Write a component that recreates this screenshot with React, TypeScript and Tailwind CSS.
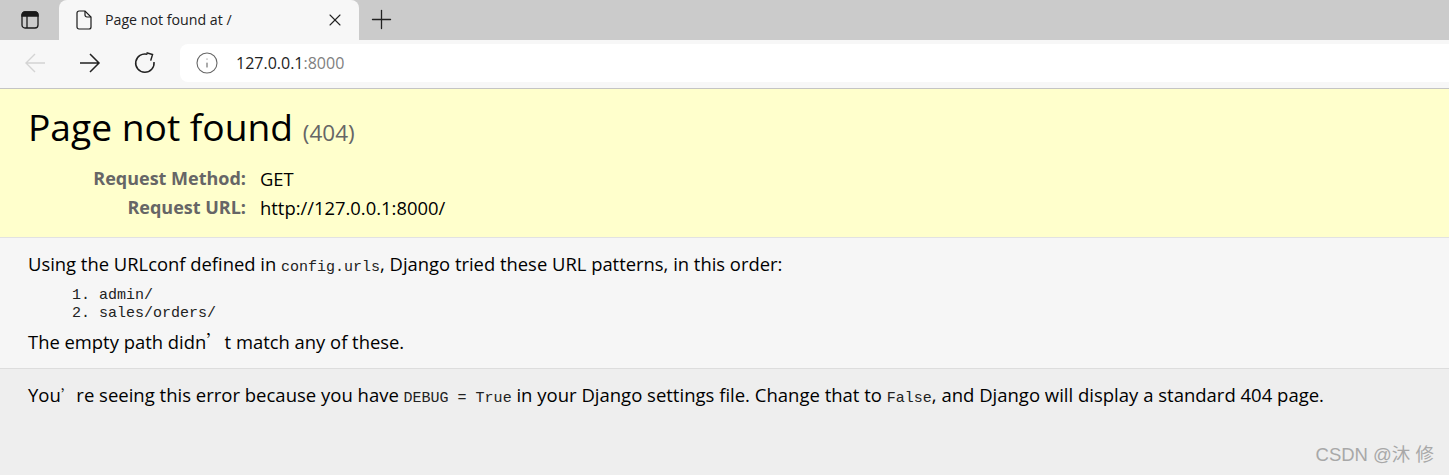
import { Info, Plus, X } from "lucide-react";

function TabsIcon() {
  return (
    <svg width="18" height="18" viewBox="0 0 18 18" fill="none" stroke="#1a1a1a" strokeWidth="1.3">
      <rect x="1" y="1" width="16" height="16" rx="3" />
      <path d="M1 4.2a3 3 0 0 1 3-3.2h10a3 3 0 0 1 3 3.2V5H1z" fill="#1a1a1a" />
      <path d="M6 5v12" />
    </svg>
  );
}

function PageIcon() {
  return (
    <svg width="16" height="20" viewBox="0 0 16 20" fill="none" stroke="#1a1a1a" strokeWidth="1.2">
      <path d="M3 1h6l6 6v10a2 2 0 0 1-2 2H3a2 2 0 0 1-2-2V3a2 2 0 0 1 2-2z" />
      <path d="M9 1v4a2 2 0 0 0 2 2h4" />
    </svg>
  );
}

function BackIcon({ color }: { color: string }) {
  return (
    <svg width="22" height="20" viewBox="0 0 22 20" fill="none" stroke={color} strokeWidth="1.4">
      <path d="M21 10H2M11 1l-9 9 9 9" />
    </svg>
  );
}

function ForwardIcon() {
  return (
    <svg width="22" height="20" viewBox="0 0 22 20" fill="none" stroke="#222" strokeWidth="1.5">
      <path d="M1 10h19M11 1l9 9-9 9" />
    </svg>
  );
}

function ReloadIcon() {
  return (
    <svg width="22" height="22" viewBox="0 0 22 22" fill="none" stroke="#222" strokeWidth="1.5">
      <path d="M13.5 2.3A9.2 9.2 0 1 0 20 10" />
      <path d="M12.5 .8l6 1.8-1.8 6" />
    </svg>
  );
}

function Code({ children }: { children: string }) {
  return <code className="font-['Liberation_Mono',monospace] text-[15px] text-[#222] whitespace-pre">{children}</code>;
}

// the quote falls back to a CJK font in the original, so it takes a full em
function Quote({ className = "" }: { className?: string }) {
  return <span className={`font-['Noto_Sans_CJK_SC',sans-serif] font-light ${className}`}>’</span>;
}

export default function App() {
  return (
    <div className="h-[475px] w-[1449px] overflow-hidden bg-[#eeeeee] font-['Open_Sans',sans-serif] text-[18.4px] text-black relative">
      <div className="flex h-10 items-end bg-[#cbcbcb]">
        <div className="flex h-10 w-[59px] items-center justify-center pb-[1px]">
          <TabsIcon />
        </div>
        <div className="flex h-10 w-[300px] items-center rounded-t-lg bg-[#f7f7f7] pl-[17px] pr-[14px]">
          <PageIcon />
          <span className="ml-[13px] flex-1 pb-[1px] text-[14.2px] text-[#222]">Page not found at /</span>
          <X size={20} strokeWidth={1.3} color="#222" />
        </div>
        <div className="flex h-10 w-[44px] items-center justify-center pb-[1px]">
          <Plus size={31} strokeWidth={1} color="#222" />
        </div>
      </div>

      <div className="flex h-[49px] items-center border-b border-[#c4c4c4] bg-[#f7f7f7] pb-[2px]">
        <div className="flex w-[180px] items-center pl-[24px]">
          <BackIcon color="#d4d4d4" />
          <div className="ml-[33px]">
            <ForwardIcon />
          </div>
          <div className="ml-[33px]">
            <ReloadIcon />
          </div>
        </div>
        <div className="flex h-[38px] flex-1 items-center rounded-l-lg bg-white pl-[15px]">
          <Info size={24} strokeWidth={1.1} color="#666" />
          <span className="ml-[17px] text-[16px] text-[#222]">
            127.0.0.1<span className="text-[#808080]">:8000</span>
          </span>
        </div>
      </div>

      <div className="h-[149px] border-b border-[#e2e2e2] bg-[#ffffcc] px-7 pt-[10px]">
        <h1 className="text-[37.2px] leading-[56px] font-normal">
          Page not found <span className="text-[22.5px] text-[#666]">(404)</span>
        </h1>
        <table className="mt-[3px] border-separate border-spacing-0">
          <tbody>
            <tr className="h-[29px]">
              <th className="w-[232px] pr-[14px] text-right text-[18px] font-bold text-[#666]">Request Method:</th>
              <td>GET</td>
            </tr>
            <tr className="h-[29px]">
              <th className="pr-[14px] text-right text-[18px] font-bold text-[#666]">Request URL:</th>
              <td>http://127.0.0.1:8000/</td>
            </tr>
          </tbody>
        </table>
      </div>

      <div className="h-[131px] border-b border-[#dddddd] bg-[#f6f6f6] px-7 pt-[13px]">
        <p className="leading-[25px]">
          Using the URLconf defined in <Code>config.urls</Code>, Django tried these URL patterns, in this order:
        </p>
        <ol className="mt-[7px] list-decimal pl-[71px] font-['Liberation_Mono',monospace] text-[15px] leading-[18px] text-[#222]">
          <li>admin/</li>
          <li>sales/orders/</li>
        </ol>
        <p className="mt-[6px] leading-[25px]">The empty path didn<Quote />t match any of these.</p>
      </div>

      <div className="px-7 pt-[13px]">
        <p className="text-[18.5px] leading-[25px]">
          You<Quote className="text-[15.5px]" />re seeing this error because you have <Code>DEBUG = True</Code> in your Django settings file. Change that to <Code>False</Code>, and Django will display a standard 404 page.
        </p>
      </div>

      <div className="absolute right-[15px] top-[443px] font-['Liberation_Sans','Noto_Sans_CJK_SC',sans-serif] text-[18.5px] leading-6 text-[#a8a8a8]">
        CSDN @沐 修
      </div>
    </div>
  );
}
